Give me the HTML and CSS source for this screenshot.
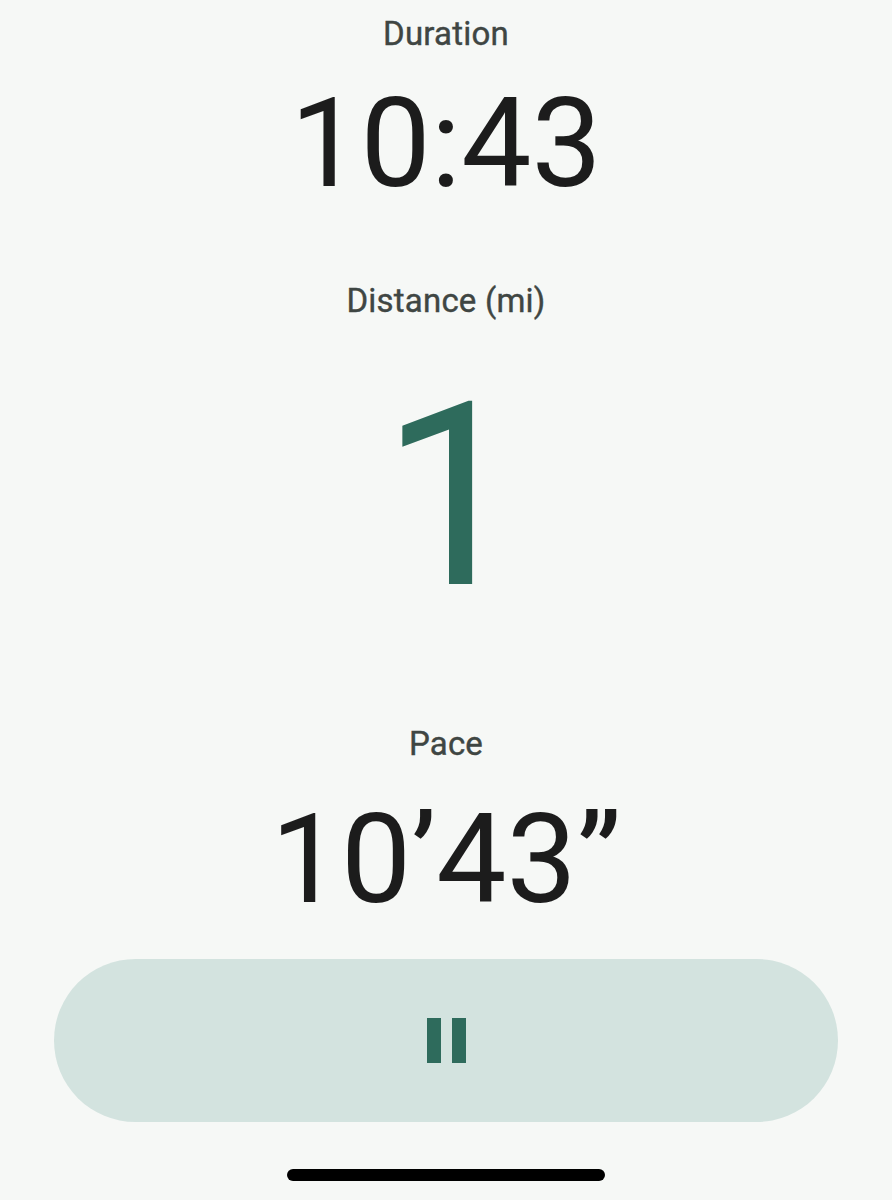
FILE: index.html
```html
<!DOCTYPE html>
<html>
<head>
<meta charset="utf-8">
<link rel="stylesheet" href="styles.css">
</head>
<body>
<main class="screen">
  <section class="stat stat-duration">
    <div class="label">Duration</div>
    <div class="value">10:43</div>
  </section>
  <section class="stat stat-distance">
    <div class="label">Distance (mi)</div>
    <div class="value value-big">1</div>
  </section>
  <section class="stat stat-pace">
    <div class="label">Pace</div>
    <div class="value">10’43”</div>
  </section>
  <button class="pause" aria-label="Pause">
    <span class="bar"></span><span class="bar"></span>
  </button>
  <div class="home-indicator"></div>
</main>
</body>
</html>
```

FILE: styles.css
```css
html, body {
  margin: 0;
  padding: 0;
  background: #f6f8f6;
}
.screen {
  width: 892px;
  height: 1200px;
  display: flex;
  flex-direction: column;
  align-items: center;
  font-family: Roboto, "Open Sans", sans-serif;
}
.stat {
  display: flex;
  flex-direction: column;
  align-items: center;
}
.label {
  font-size: 33px;
  line-height: 40px;
  font-weight: 400;
  color: #3f4643;
  letter-spacing: 0.2px;
  -webkit-text-stroke: 0.4px #3f4643;
}
.value {
  font-size: 125px;
  line-height: 125px;
  font-weight: 400;
  color: #1c1c1c;
}
.stat-duration { margin-top: 14px; }
.stat-duration .value { margin-top: 27px; }
.stat-distance { margin-top: 75px; }
.value-big {
  font-size: 256px;
  line-height: 256px;
  color: #2e6b5c;
  margin-top: 48px;
  padding-left: 14px;
}
.stat-pace { margin-top: 99px; }
.stat-pace .value { margin-top: 33px; }
.pause {
  margin-top: 37px;
  width: 784px;
  height: 163px;
  border: none;
  border-radius: 82px;
  background: #d3e3df;
  display: flex;
  align-items: center;
  justify-content: center;
  gap: 11px;
  padding: 0;
}
.bar {
  width: 14px;
  height: 45px;
  background: #2e6b5c;
}
.home-indicator {
  margin-top: 47px;
  width: 318px;
  height: 12px;
  border-radius: 6px;
  background: #000;
}
```
